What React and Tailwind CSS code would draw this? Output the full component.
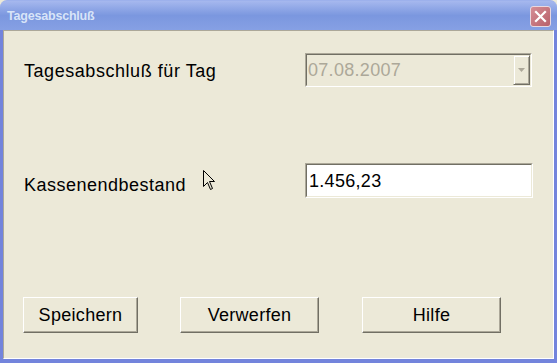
import React from "react";

function Btn({ children, w }) {
  return (
    <div
      className={`${w} h-[36px] border border-t-white border-l-white border-r-[#716f64] border-b-[#716f64] bg-[#ece9d8] shadow-[inset_-1px_-1px_0_#aca899] flex items-center justify-center text-[18px] text-black tracking-[0.3px]`}
    >
      {children}
    </div>
  );
}

export default function App() {
  return (
    <div
      className="w-[557px] h-[363px] flex flex-col bg-[#ece9d8] relative overflow-hidden"
      style={{ fontFamily: '"Liberation Sans", Arial, sans-serif' }}
    >
      {/* Title bar */}
      <div className="h-[30px] shrink-0 rounded-t-[7px] bg-gradient-to-b from-[#a6b8ee] via-[#7b97df] to-[#86a0e4] flex items-center justify-between pl-[7px] pr-[6px] border-t border-[#9db1ec]">
        <span className="text-[12.5px] font-bold text-[#d8e4f8] tracking-[-0.2px] mt-[1px]">
          Tagesabschluß
        </span>
        <div className="w-[21px] h-[21px] rounded-[3px] border border-[#e8d8e0] bg-gradient-to-br from-[#d58e96] to-[#b8606a] flex items-center justify-center mt-[1px]">
          <svg width="13" height="13" viewBox="0 0 13 13">
            <path d="M2 2 L11 11 M11 2 L2 11" stroke="#ffffff" strokeWidth="2.2" strokeLinecap="square" />
          </svg>
        </div>
      </div>
      {/* Window frame */}
      <div className="flex-1 flex flex-col bg-[#7384dc] px-[3px] pb-[4px]">
        <div className="flex-1 bg-[#ece9d8] border-t border-l border-[#aca899] border-r-white border-b-white border-r border-b relative">
          <div className="flex flex-col">
            {/* Row 1 */}
            <div className="flex items-center mt-[22px] h-[34px]">
              <div className="w-[301px] pl-[20px] text-[18px] text-black leading-none tracking-[0.55px] pt-[2px]">
                Tagesabschluß für Tag
              </div>
              <div className="w-[227px] h-[34px] border border-t-[#aca899] border-l-[#aca899] border-r-white border-b-white">
                <div className="h-full border border-t-[#716f64] border-l-[#716f64] border-r-[#ece9d8] border-b-[#ece9d8] flex items-center justify-between">
                  <span className="pl-[1px] text-[18px] text-[#aca899] leading-none tracking-[0.3px]">07.08.2007</span>
                  <div className="w-[17px] h-[30px] border border-t-[#ece9d8] border-l-[#ece9d8] border-r-[#716f64] border-b-[#716f64] shadow-[inset_1px_1px_0_#ffffff,inset_-1px_-1px_0_#aca899] flex items-center justify-center">
                    <svg width="7" height="4" viewBox="0 0 7 4">
                      <path d="M0 0 H7 L3.5 4 Z" fill="#aca899" />
                    </svg>
                  </div>
                </div>
              </div>
            </div>
            {/* Row 2 */}
            <div className="flex items-center mt-[76px] h-[35px]">
              <div className="w-[301px] pl-[20px] text-[18px] text-black leading-none pt-[9px] tracking-[0.5px]">
                Kassenendbestand
              </div>
              <div className="w-[228px] h-[35px] border border-t-[#aca899] border-l-[#aca899] border-r-white border-b-white">
                <div className="h-full border border-t-[#716f64] border-l-[#716f64] border-r-[#ece9d8] border-b-[#ece9d8] bg-white flex items-center">
                  <span className="pl-[2px] text-[18px] text-black leading-none tracking-[0.3px]">1.456,23</span>
                </div>
              </div>
            </div>
            {/* Buttons */}
            <div className="flex mt-[99px] pl-[19px]">
              <Btn w="w-[115px]">Speichern</Btn>
              <div className="ml-[42px]">
                <Btn w="w-[139px]">Verwerfen</Btn>
              </div>
              <div className="ml-[43px]">
                <Btn w="w-[139px]">Hilfe</Btn>
              </div>
            </div>
          </div>
          {/* mouse cursor */}
          <svg className="absolute left-[199px] top-[139px]" width="13" height="21" viewBox="0 0 13 21">
            <path d="M0.5 0.5 V16.5 L4.5 12.5 L7.5 19.5 L9.5 18.5 L6.5 11.5 H11.5 Z" fill="#ece9d8" stroke="#000" strokeWidth="1" />
          </svg>
        </div>
      </div>
    </div>
  );
}
